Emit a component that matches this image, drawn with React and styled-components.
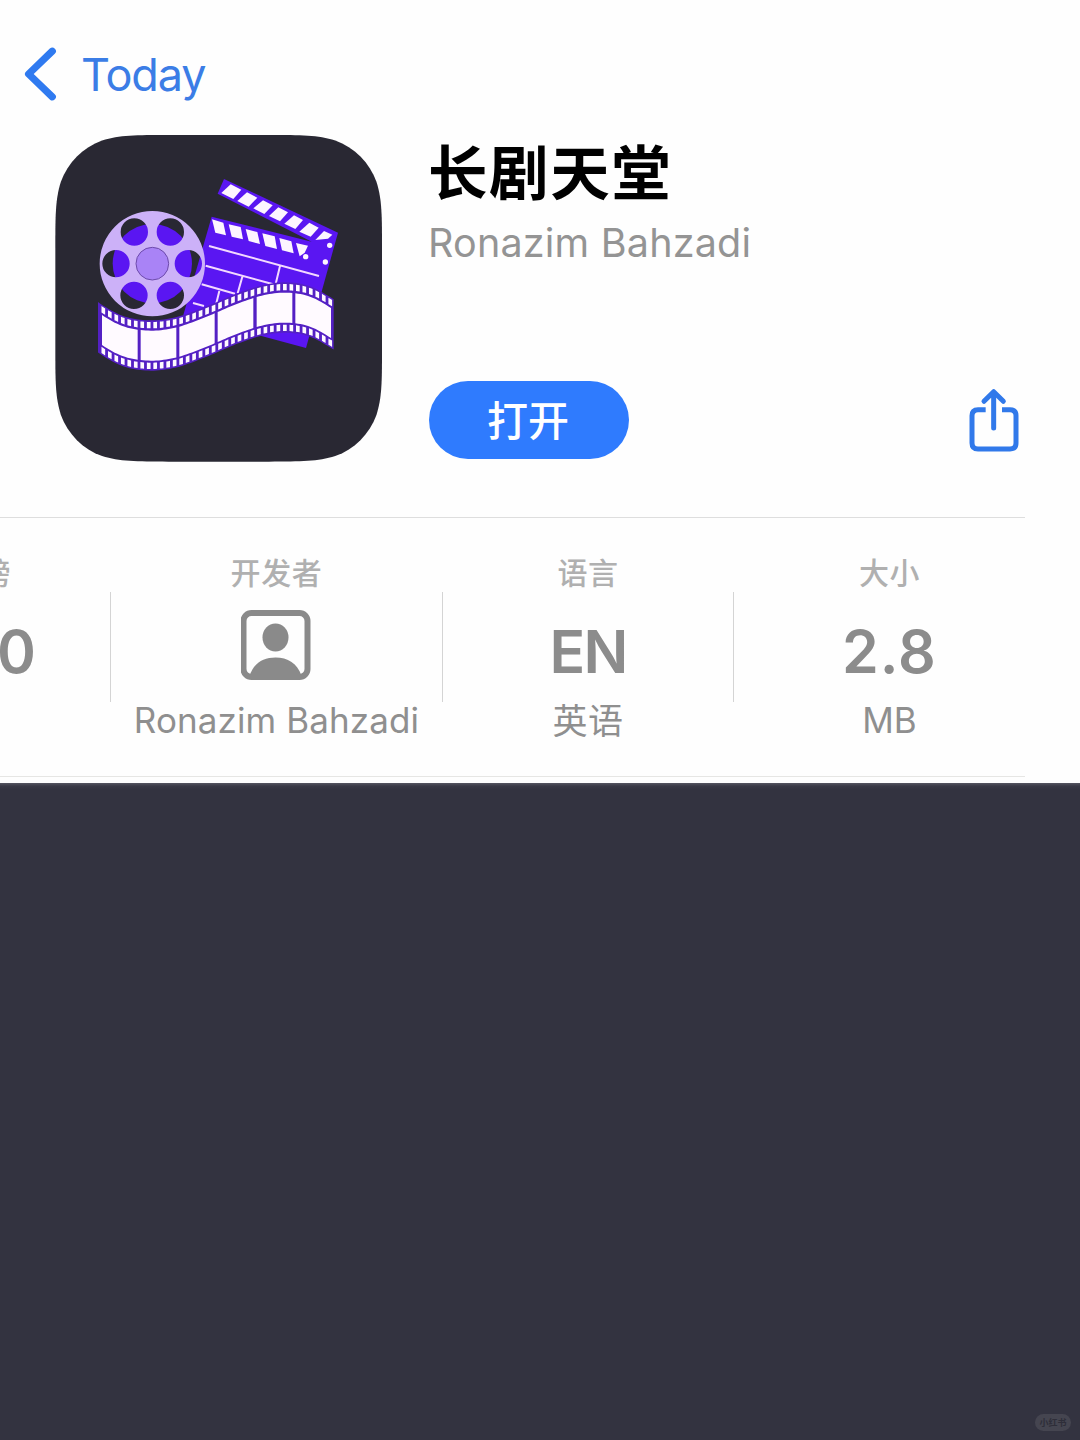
import React from 'react'
import styled, { createGlobalStyle } from 'styled-components'

const GlobalStyle = createGlobalStyle`
  body {
    margin: 0;
    background: #333340;
    font-family: Inter, 'Noto Sans CJK SC', sans-serif;
  }
`

const Page = styled.div`
  display: flex;
  flex-direction: column;
  width: 1080px;
  height: 1440px;
  overflow: hidden;
`

const Sheet = styled.main`
  box-sizing: border-box;
  height: 783px;
  background: #fefefe;
`

const Nav = styled.nav`
  display: flex;
  align-items: center;
  gap: 24px;
  height: 60px;
  padding: 44px 0 0 24px;
  color: #3b7de6;
`

const BackLabel = styled.span`
  padding-top: 2px;
  font-size: 45px;
  line-height: 60px;
  letter-spacing: -1.1px;
`

const Hero = styled.section`
  display: flex;
  gap: 46px;
  height: 328px;
  padding: 31px 60px 54px 55px;
`

const Info = styled.div`
  display: flex;
  flex-direction: column;
  flex: 1;
  height: 324px;
`

const Title = styled.h1`
  margin: 0 0 0 -1px;
  padding-top: 2px;
  color: #000;
  font-size: 59.5px;
  font-weight: 700;
  line-height: 72px;
  letter-spacing: 1.6px;
`

const Subtitle = styled.div`
  margin-left: -1px;
  color: #949494;
  font-size: 39.5px;
  line-height: 69px;
  letter-spacing: 0.2px;
`

const Actions = styled.div`
  display: flex;
  align-items: center;
  justify-content: space-between;
  margin-top: auto;
`

const OpenButton = styled.button`
  width: 200px;
  height: 78px;
  padding: 2px 2px 0 0;
  border: 0;
  border-radius: 39px;
  background: #2f7bfe;
  color: #fff;
  font-family: inherit;
  font-size: 41px;
  font-weight: 500;
  line-height: 76px;
`

const Stats = styled.section`
  box-sizing: border-box;
  display: flex;
  width: 1025px;
  height: 260px;
  border-top: 1px solid #dedede;
  border-bottom: 1px solid #e6e6e4;
`

const Stat = styled.div`
  display: flex;
  flex: none;
  flex-direction: column;
  align-items: center;
  width: ${p => p.$width}px;
  padding-top: 35px;
`

const CutStat = styled(Stat)`
  box-sizing: border-box;
  align-items: flex-end;
  overflow: hidden;
`

const Separator = styled.div`
  flex: none;
  width: 1px;
  height: 110px;
  margin-top: 74px;
  background: #d4d4d4;
`

const Label = styled.div`
  margin-right: ${p => p.$inset || 0}px;
  color: #b0b0b0;
  font-size: 30px;
  font-weight: 500;
  line-height: 40px;
  letter-spacing: 0.6px;
`

const Value = styled.div`
  display: flex;
  align-items: center;
  box-sizing: border-box;
  height: 108px;
  margin-right: ${p => p.$inset || 0}px;
  padding-top: ${p => (p.$icon ? 0 : 8)}px;
  padding-bottom: ${p => (p.$icon ? 4 : 0)}px;
  color: #8c8c8c;
  font-size: 59px;
  font-weight: 600;
  letter-spacing: ${p => p.$spacing || 0}px;
`

const Caption = styled.div`
  padding-top: ${p => p.$drop || 0}px;
  color: #8f8f8f;
  font-size: 35px;
  line-height: 38px;
  letter-spacing: ${p => p.$spacing || 0}px;
  white-space: nowrap;
`

const Backdrop = styled.div`
  display: flex;
  align-items: flex-end;
  justify-content: flex-end;
  flex: 1;
  padding: 0 9px 9px 0;
  background: linear-gradient(#565662 0, #3a3a47 3px, #333340 7px);
`

const Badge = styled.span`
  width: 36px;
  height: 17px;
  border-radius: 9px;
  background: #454550;
  color: #2e2e39;
  font-size: 9px;
  font-weight: 700;
  line-height: 17px;
  text-align: center;
`

// continuous-curvature corner, like the iOS icon shape
const squircle = (x, y, s, r) => {
  const e = x + s
  const b = y + s
  const [k0, k1, k2, k3, k4, k5, k6] = [
    1.528665, 1.088493, 0.868407, 0.631494, 0.074911, 0.372824, 0.16906,
  ].map(k => k * r)
  return `M${x + k0} ${y}H${e - k0}
    C${e - k1} ${y} ${e - k2} ${y} ${e - k3} ${y + k4}
    C${e - k5} ${y + k6} ${e - k6} ${y + k5} ${e - k4} ${y + k3}
    C${e} ${y + k2} ${e} ${y + k1} ${e} ${y + k0}
    V${b - k0}
    C${e} ${b - k1} ${e} ${b - k2} ${e - k4} ${b - k3}
    C${e - k6} ${b - k5} ${e - k5} ${b - k6} ${e - k3} ${b - k4}
    C${e - k2} ${b} ${e - k1} ${b} ${e - k0} ${b}
    H${x + k0}
    C${x + k1} ${b} ${x + k2} ${b} ${x + k3} ${b - k4}
    C${x + k5} ${b - k6} ${x + k6} ${b - k5} ${x + k4} ${b - k3}
    C${x} ${b - k2} ${x} ${b - k1} ${x} ${b - k0}
    V${y + k0}
    C${x} ${y + k1} ${x} ${y + k2} ${x + k4} ${y + k3}
    C${x + k6} ${y + k5} ${x + k5} ${y + k6} ${x + k3} ${y + k4}
    C${x + k2} ${y} ${x + k1} ${y} ${x + k0} ${y}Z`
}

// the wave that the film strip follows
const wave = [
  [70, 470], [145, 531], [220, 572], [300, 585], [380, 575], [470, 543],
  [560, 505], [640, 479], [710, 471], [780, 483], [850, 521], [920, 565],
]

const waveY = x => {
  let i = 1
  while (i < wave.length - 3 && x > wave[i + 1][0]) i++
  const [p0, p1, p2, p3] = wave.slice(i - 1, i + 3)
  const d = p2[0] - p1[0]
  const t = (x - p1[0]) / d
  const m1 = ((p2[1] - p0[1]) / (p2[0] - p0[0])) * d
  const m2 = ((p3[1] - p1[1]) / (p3[0] - p1[0])) * d
  const t2 = t * t
  const t3 = t2 * t
  return (2 * t3 - 3 * t2 + 1) * p1[1] + (t3 - 2 * t2 + t) * m1 +
    (3 * t2 - 2 * t3) * p2[1] + (t3 - t2) * m2
}

const band = (x1, x2, top, bottom) => {
  const n = Math.max(2, Math.ceil((x2 - x1) / 8))
  const xs = Array.from({ length: n + 1 }, (_, i) => x1 + ((x2 - x1) * i) / n)
  const up = xs.map(x => `${x},${waveY(x) + top}`)
  const down = xs.reverse().map(x => `${x},${waveY(x) + bottom}`)
  return up.concat(down).join(' ')
}

const frames = [[156, 263], [272, 379], [388, 494], [503, 610], [620, 727], [736, 843]]
const perforations = Array.from({ length: 36 }, (_, i) => 160 + i * 19.45)
const reelHoles = [[253, 306], [361, 306], [198, 401], [415, 401], [252, 496], [361, 496]]

const reelPath = [[307, 401, 158], ...reelHoles.map(([x, y]) => [x, y, 41])]
  .map(([x, y, r]) => `M${x - r} ${y}a${r} ${r} 0 1 0 ${2 * r} 0a${r} ${r} 0 1 0 ${-2 * r} 0Z`)
  .join('')

const armStripes = [
  '542,163 574,179 550,207 514,189',
  '591,187 622,203 596,230 562,213',
  '639,211 668,226 643,252 610,235',
  '685,232 714,247 690,274 657,258',
  '732,256 759,270 736,297 703,281',
  '778,278 806,293 782,320 748,305',
  '822,303 847,314 834,326 796,330',
]

const boardStripes = [
  '486,268 520,278 528,316 496,308',
  '536,283 572,291 579,328 545,320',
  '587,297 622,306 630,342 596,333',
  '637,310 674,319 681,357 646,348',
  '688,324 724,334 731,370 696,361',
  '738,339 774,347 764,368 749,379',
]

const AppIcon = () => (
  <svg width="328" height="328" viewBox="15 15 984 984">
    <path d={squircle(16, 15, 980, 222)} fill="#292833" />
    <g fill="#5a16f2">
      <path d="M522 147L864 308L768 654L400 555L485 260L785 335L503 191Z" />
      <circle cx="307" cy="401" r="119" />
    </g>
    <g fill="#fdf5ff">
      {armStripes.map(s => <polygon key={s} points={s} />)}
      {boardStripes.map(s => <polygon key={s} points={s} />)}
      <circle cx="767" cy="380" r="8" />
      <circle cx="839" cy="346" r="8" />
      <circle cx="826" cy="396" r="8" />
    </g>
    <path
      d="M477 348L807 438M467 407L670 463M690 408L677 462M455 463L555 491M577 440L563 490M508 483L499 520M429 519L462 528"
      fill="none"
      stroke="#f3d9ff"
      strokeWidth="6"
    />
    <path d={reelPath} fill="#ccb1f8" fillRule="evenodd" />
    <circle cx="307" cy="401" r="49" fill="#a983f6" stroke="#6d4bab" strokeWidth="3" />
    <polygon points={band(144, 851, -14, 137)} fill="#5420c4" />
    <g fill="#fffaff">
      {frames.map(([a, b]) => <polygon key={a} points={band(a, b, 17, 107)} />)}
      {perforations.map(x => (
        <React.Fragment key={x}>
          <polygon points={band(x - 5.5, x + 5.5, -9, 10)} />
          <polygon points={band(x - 5.5, x + 5.5, 113, 132)} />
        </React.Fragment>
      ))}
    </g>
  </svg>
)

const BackIcon = () => (
  <svg width="33" height="54" viewBox="0 0 33 54">
    <path
      d="M28.3 4.2L4.6 27L28.3 49.8"
      fill="none"
      stroke="#2f7af0"
      strokeWidth="7.2"
      strokeLinecap="round"
      strokeLinejoin="round"
    />
  </svg>
)

const ShareIcon = () => (
  <svg width="52" height="66" viewBox="54 22 156 198">
    <g fill="none" stroke="#3179ea" strokeWidth="15" strokeLinejoin="round">
      <path d="M107 90H84Q66 90 66 108V190Q66 208 84 208H180Q198 208 198 190V108Q198 90 180 90H156" />
      <path d="M131 38V145M102 65L131 36L160 65" strokeLinecap="round" />
    </g>
  </svg>
)

const DeveloperIcon = () => (
  <svg width="71" height="70" viewBox="0.5 0 71 70">
    <rect x="3" y="3" width="64" height="64" rx="8" fill="none" stroke="#8a8a8a" strokeWidth="6" />
    <ellipse cx="35" cy="27.5" rx="13" ry="14" fill="#8a8a8a" />
    <path d="M9 66C13 53 23 47.5 35 47.5S57 53 61 66Z" fill="#8a8a8a" />
  </svg>
)

const App = () => (
  <Page>
    <GlobalStyle />
    <Sheet>
      <Nav>
        <BackIcon />
        <BackLabel>Today</BackLabel>
      </Nav>
      <Hero>
        <AppIcon />
        <Info>
          <Title>长剧天堂</Title>
          <Subtitle>Ronazim Bahzadi</Subtitle>
          <Actions>
            <OpenButton>打开</OpenButton>
            <ShareIcon />
          </Actions>
        </Info>
      </Hero>
      <Stats>
        <CutStat $width={110}>
          <Label $inset={99}>榜</Label>
          <Value $inset={74}>0</Value>
        </CutStat>
        <Separator />
        <Stat $width={331}>
          <Label>开发者</Label>
          <Value $icon><DeveloperIcon /></Value>
          <Caption $spacing={0.1}>Ronazim Bahzadi</Caption>
        </Stat>
        <Separator />
        <Stat $width={290}>
          <Label>语言</Label>
          <Value $spacing={-1.8}>EN</Value>
          <Caption $spacing={0.5} $drop={1}>英语</Caption>
        </Stat>
        <Separator />
        <Stat $width={311}>
          <Label>大小</Label>
          <Value $spacing={1}>2.8</Value>
          <Caption>MB</Caption>
        </Stat>
      </Stats>
    </Sheet>
    <Backdrop>
      <Badge>小红书</Badge>
    </Backdrop>
  </Page>
)

export default App
